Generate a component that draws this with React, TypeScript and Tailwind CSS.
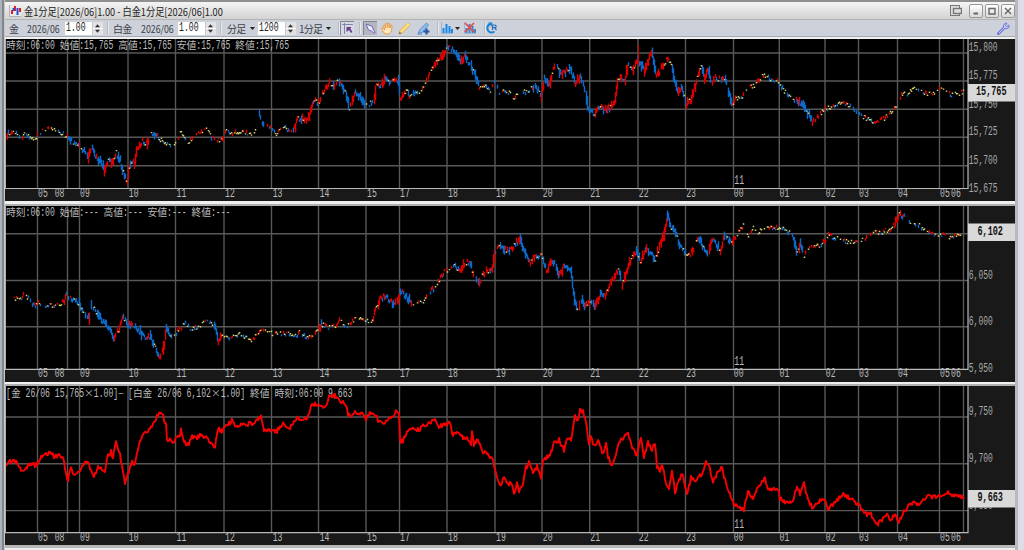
import type { ReactNode } from 'react';

type Point = [number, number];

interface PanelProps {
  top: number;
  height: number;
  axisY: number;
  title: string;
  titleY: number;
  gridLines: number[];
  prices: [string, number][];
  current: string;
  currentY: number;
  children: ReactNode;
}

const verticals = [
  37.5, 67.5, 79.5, 128, 175.5, 224, 271.5, 318.5, 366, 399.5, 447, 495, 542,
  589.7, 638, 685.5, 733.5, 779.3, 825, 858.5, 897.5, 939.5, 963.5,
];

const hours: [string, number][] = [
  ['05', 38], ['08', 54.7], ['09', 80], ['10', 128.8], ['11', 176.5],
  ['12', 225], ['13', 272.7], ['14', 319.7], ['15', 367], ['17', 400],
  ['18', 448], ['19', 496], ['20', 542.8], ['21', 590.3], ['22', 638.8],
  ['23', 686.2], ['00', 733.8], ['01', 779.6], ['02', 825.8], ['03', 859],
  ['04', 898], ['05', 940], ['06', 951],
];

const parse = (s: string): Point[] =>
  s.trim().split(/\s+/).map((p) => p.split(',').map(Number) as Point);

const gold = parse(`
6,142 8,131 10,134 16,132 20,140 25,133 30,139 35,138 40,132 45,130 50,128 55,130 62,133 68,138 75,144 82,149
88,156 91,146 95,158 100,160 104,169 108,160 111,164 116,153 120,160 124,177 127,180 130,162 134,163 137,148
142,141 147,145 150,133 153,133 158,138 165,143 172,147 177,139 181,131 187,143 194,136 200,132 207,128 212,139
216,141 222,139 226,130 232,134 240,131 247,134 254,132 259,115 263,124 270,129 276,134 283,126 289,131 294,128
298,118 304,121 309,117 313,101 319,103 323,92 329,83 334,85 337,79 340,85 345,90 349,108 355,93 361,98 365,104
372,103 373,104 376,86 382,84 385,77 388,81 393,81 398,79 400,98 404,95 406,90 409,97 413,92 418,93 423,87
428,75 434,64 440,57 447,47 452,49 457,55 461,61 465,57 470,65 476,78 479,89 485,86 490,90 494,83 499,92 504,91
509,93 514,99 519,92 525,92 531,88 535,85 541,97 544,79 549,84 553,69 557,67 561,75 569,68 575,82 580,76 585,92
588,109 594,114 598,106 604,110 610,108 615,100 618,79 625,79 628,62 632,70 638,60 644,71 648,60 652,53 656,78
661,67 666,60 670,60 674,80 678,93 681,85 686,105 691,98 695,85 701,66 704,78 708,70 711,84 715,78 720,79
725,78 729,94 732,105 736,98 742,97 748,88 754,86 760,78 765,75 772,80 778,81 783,90 789,97 796,101 803,105
810,117 812,123 818,116 825,109 832,106 840,102 850,106 857,113 865,118 874,123 882,120 890,113 896,106 901,95
908,93 915,88 922,93 932,95 940,89 950,95 957,94 964,92`);

const platinum = parse(`
12,299 20,298 25,294 30,301 34,305 38,303 46,306 53,306 60,305 64,300 66,294 69,298 75,299 80,305 85,315 89,318
91,306 96,312 101,320 106,325 111,332 114,340 118,330 123,317 128,325 135,327 140,332 145,338 150,337 155,347
159,357 163,350 166,330 172,336 178,331 184,323 190,329 196,327 204,323 207,321 214,324 218,341 222,335 230,338
240,334 250,341 258,333 265,328 272,334 280,333 288,334 296,335 300,332 308,338 315,334 321,324 328,328 336,325
340,319 343,324 348,326 356,318 364,321 372,321 375,310 380,299 385,296 390,302 396,304 400,291 406,297 411,303
418,302 425,300 430,291 436,286 441,275 447,270 453,264 459,270 465,263 470,263 473,276 479,281 485,272 492,268
495,250 500,245 505,250 511,249 515,243 520,240 524,253 529,263 535,256 541,256 546,270 552,260 557,270 559,276
564,265 571,271 573,292 575,303 578,312 580,298 585,307 590,301 595,306 600,293 605,297 612,278 618,270 622,284
628,265 632,258 636,250 640,262 645,250 650,252 655,260 660,243 664,235 667,215 671,227 675,232 680,247 685,252
688,256 692,252 698,238 703,248 708,254 712,240 716,244 720,250 724,236 728,240 732,243 738,232 743,226 747,236
753,227 758,232 765,229 775,228 780,227 790,233 794,240 797,253 800,245 804,256 808,248 816,247 822,244 828,235
835,238 842,240 850,243 858,240 865,239 872,233 882,232 890,229 895,224 899,215 904,217 910,225 916,222 923,230
932,235 940,234 950,237 955,236 962,233`);

const spread = parse(`
6,468 9,462 13,461 17,460 20,469 25,471 28,465 37,465 41,457 46,455 51,453 55,457 60,455 63,459 67,477 68,480
70,468 75,474 79,472 83,464 87,461 91,470 94,475 98,468 105,470 108,456 111,452 113,458 116,441 120,455 123,472
125,486 128,474 132,462 135,464 140,440 143,435 147,432 152,425 155,421 159,413 162,413 166,425 167,439 173,441
180,436 181,430 184,443 189,444 192,436 196,438 200,435 205,437 210,443 215,446 218,428 222,432 225,427 231,422
232,419 235,426 245,424 255,423 261,417 264,430 270,430 277,431 283,423 290,428 296,419 300,418 306,419 310,411
312,404 318,405 322,408 325,408 329,396 335,395 340,401 346,405 348,415 352,416 355,411 359,413 362,412 366,419
370,414 374,412 378,420 383,423 388,420 393,418 396,411 399,413 400,441 403,441 408,430 413,427 419,430 423,425
430,424 435,419 438,426 444,425 450,422 453,436 457,431 462,437 468,439 471,444 472,432 474,444 478,440 482,451
487,452 490,460 492,456 495,470 500,486 504,478 508,484 511,482 514,493 517,484 519,491 523,484 526,468 529,463
533,474 537,466 541,478 543,460 550,455 554,443 559,440 564,450 567,439 571,440 575,415 578,421 580,410 583,411
586,422 589,445 591,437 594,446 598,440 603,454 606,443 608,457 612,465 616,453 620,441 624,437 628,434 632,446
637,456 641,438 644,456 648,443 652,450 655,443 657,466 660,472 662,463 666,482 669,488 672,470 675,492 680,478
683,474 687,495 691,478 697,480 703,472 706,463 710,469 713,482 718,471 722,467 726,485 732,500 735,505 740,508
744,510 748,491 753,500 757,490 765,479 767,487 775,490 779,491 780,499 786,502 792,504 797,486 800,494 804,484
808,500 813,508 818,502 825,499 828,509 833,504 838,499 844,494 850,499 857,503 862,510 867,515 871,514 876,525
881,521 887,515 890,520 895,516 899,521 904,512 908,506 913,503 920,504 926,497 933,497 940,495 947,493 955,495
964,497`);

// small seeded generator so every render gives the same ticks
const createRandom = (seed: number) => {
  let s = seed;
  return () => {
    s = (s * 16807) % 2147483647;
    return s / 2147483647;
  };
};

const valueAt = (points: Point[], x: number) => {
  let i = 1;
  while (i < points.length - 1 && points[i][0] < x) i++;
  const [x0, y0] = points[i - 1];
  const [x1, y1] = points[i];
  return y0 + ((y1 - y0) * (x - x0)) / (x1 - x0);
};

const RED = '#dc0000';
const BLUE = '#0a6acc';
const YELLOW = '#d8d070';

const Candles = ({
  points,
  calm,
  seed,
}: {
  points: Point[];
  calm: Point[];
  seed: number;
}) => {
  const random = createRandom(seed);
  const paths: Record<string, string> = { [RED]: '', [BLUE]: '', [YELLOW]: '' };
  const end = points[points.length - 1][0];
  for (let x = points[0][0]; x < end; x += 1) {
    const quiet = calm.some(([a, b]) => x >= a && x <= b);
    const y = valueAt(points, x);
    const dy = valueAt(points, x + 1) - y;
    const r = random();
    const jitter = random() - 0.5;
    const size = random();
    if (r < (quiet ? 0.3 : 0.06)) continue;
    const yellow = r > (quiet ? 0.62 : 0.88);
    const color = yellow ? YELLOW : dy + jitter * 2.2 > 0 ? BLUE : RED;
    const half = yellow
      ? 0.7
      : Math.min(5, Math.abs(dy) / 2) + (quiet ? 0.5 + size : 0.9 + size * size * 3.4);
    const cy = y + jitter * (quiet ? 4.5 : 5);
    paths[color] += `M${x + 0.5} ${(cy - half).toFixed(1)}V${(cy + half).toFixed(1)}`;
  }
  return (
    <g fill="none" strokeWidth="1.4">
      <path d={paths[BLUE]} stroke={BLUE} />
      <path d={paths[RED]} stroke={RED} />
      <path d={paths[YELLOW]} stroke={YELLOW} strokeWidth="1.5" />
    </g>
  );
};

const SpreadLine = () => {
  const random = createRandom(77);
  let d = '';
  for (let x = 6; x <= 964; x += 1) {
    const y = valueAt(spread, x) + (random() - 0.5) * 4.4;
    d += `${x === 6 ? 'M' : 'L'}${x} ${y.toFixed(1)}`;
  }
  return <path d={d} fill="none" stroke="#f80000" strokeWidth="1.9" strokeLinejoin="round" />;
};

const isWide = (c: string) => c > '\u2000' || c === '×';

// fixed pitch text: kanji take two cells, everything else one narrow cell
const GridText = ({
  x,
  y,
  text,
  cell = 4.88,
  fill = '#bcbcbc',
  bold = false,
}: {
  x: number;
  y: number;
  text: string;
  cell?: number;
  fill?: string;
  bold?: boolean;
}) => {
  const runs: { text: string; x: number; wide: boolean }[] = [];
  let cursor = x;
  for (const c of text) {
    const wide = isWide(c);
    const last = runs[runs.length - 1];
    if (last && last.wide === wide) last.text += c;
    else runs.push({ text: c, x: cursor, wide });
    cursor += wide ? cell * 2 : cell;
  }
  return (
    <g fill={fill} fontWeight={bold ? 700 : 400}>
      {runs.map((run) =>
        run.wide ? (
          <text
            key={run.x}
            x={run.x}
            y={y}
            className="font-['Noto_Sans_CJK_JP',sans-serif] text-[9.76px]"
          >
            {run.text}
          </text>
        ) : (
          <text
            key={run.x}
            transform={`translate(${run.x} ${y}) scale(${cell / 7.2} 1)`}
            className="whitespace-pre font-['Liberation_Mono',monospace] text-[12px]"
          >
            {run.text}
          </text>
        ),
      )}
    </g>
  );
};

const Panel = ({
  top,
  height,
  axisY,
  title,
  titleY,
  gridLines,
  prices,
  current,
  currentY,
  children,
}: PanelProps) => (
  <svg
    className="block shrink-0 bg-[#191919]"
    width={1010}
    height={height}
    viewBox={`5 ${top} 1010 ${height}`}
  >
    <rect x="6" y={top} width="962" height={axisY - top} fill="#000" />
    <g stroke="#585858" strokeWidth="1.4">
      {verticals.map((x) => (
        <line key={x} x1={x} x2={x} y1={top} y2={axisY} />
      ))}
      {gridLines.map((y) => (
        <line key={y} x1="6" x2="968" y1={y} y2={y} />
      ))}
    </g>
    <GridText x={6} y={titleY} text={title} />
    <GridText x={734.3} y={axisY - 4.3} text="11" />
    {children}
    <path d={`M5 ${axisY}H968V${top}`} fill="none" stroke="#b8b8b8" strokeWidth="1.2" />
    <path d={`M5.5 ${top}V${axisY}`} stroke="#b0b0b0" />
    {hours.map(([label, x]) => (
      <GridText key={x} x={x} y={axisY + 8.1} text={label} />
    ))}
    {prices.map(([label, y]) => (
      <GridText key={label} x={968.8} y={y} text={label} cell={4.8} fill="#a8a8a8" />
    ))}
    <rect x="968" y={currentY} width="47" height="17.5" fill="#d9d9d9" />
    <GridText
      x={current.length > 5 ? 976 : 977.5}
      y={currentY + 11.2}
      text={current}
      cell={5.1}
      fill="#101010"
      bold
    />
  </svg>
);

const Divider = () => <div className="h-[12px] w-px bg-[#e8eaee] shadow-[-1px_0_0_#b7bac2]" />;

const Caret = () => (
  <svg width="5" height="3" viewBox="0 0 5 3" className="mt-px shrink-0">
    <path d="M0 0H5L2.5 3Z" fill="#222" />
  </svg>
);

const Label = ({ text, className }: { text: string; className: string }) => (
  <div
    className={`shrink-0 whitespace-nowrap pt-[2px] text-[10px] leading-[14px] text-[#3c4048] ${className}`}
  >
    {text}
  </div>
);

const NumberBox = ({ value }: { value: string }) => (
  <div className="flex h-[13px] w-[38px] shrink-0 items-center justify-between bg-white pl-px">
    <span className="w-[20px] origin-left scale-x-[0.68] whitespace-nowrap font-['Liberation_Mono',monospace] text-[12px] leading-[12px] text-[#222]">
      {value}
    </span>
    <svg width="11" height="13" viewBox="0 0 11 13">
      <rect width="11" height="13" fill="#e2e2e4" />
      <path d="M0 6.5H11" stroke="#fff" />
      <path d="M0.5 0V13" stroke="#c8c8cc" />
      <path d="M3 5.2H8L5.5 2.2ZM3 7.8H8L5.5 10.8Z" fill="#333" />
    </svg>
  </div>
);

const WindowButton = ({ children }: { children: ReactNode }) => (
  <div className="flex size-[14px] items-center justify-center rounded-[2px] border border-[#999] bg-gradient-to-b from-white to-[#d8d8d8]">
    <svg width="10" height="10" viewBox="0 0 10 10" fill="none" stroke="#666" strokeWidth="1.4">
      {children}
    </svg>
  </div>
);

const TitleBar = () => (
  <div className="flex h-[18px] items-center border-b border-[#b4b4b4] bg-gradient-to-b from-[#f4f4f4] to-[#d3d3d3] pl-1">
    <svg width="12" height="12" viewBox="0 0 12 12" className="shrink-0">
      <rect width="12" height="12" fill="#e8e8ee" />
      <path d="M0.5 0V11.5H12" fill="none" stroke="#b0b0b8" />
      <path d="M3 5V9M6 1V6M11 3V7" stroke="#e02020" strokeWidth="2" />
      <path d="M4.5 3V6M8.5 3V10" stroke="#2050d0" strokeWidth="2" />
    </svg>
    <div className="ml-[3px] w-[220px] origin-left scale-x-[0.837] whitespace-nowrap text-[11px] leading-[16px] text-[#222]">
      金1分足[2026/06]1.00 - 白金1分足[2026/06]1.00
    </div>
    <div className="ml-auto flex items-center gap-[2px]">
      <svg width="12" height="12" viewBox="0 0 12 12" className="mr-[5px]" fill="#ddd" stroke="#777">
        <rect x="0.5" y="0.5" width="9" height="10" />
        <rect x="3.5" y="3.5" width="8" height="5" strokeWidth="1.4" />
      </svg>
      <WindowButton>
        <path d="M2.5 7.5H7" strokeWidth="2" />
      </WindowButton>
      <WindowButton>
        <path d="M2 2.5H8V8H2Z" />
      </WindowButton>
      <WindowButton>
        <path d="M2 2L8 8M8 2L2 8" />
      </WindowButton>
    </div>
  </div>
);

const Toolbar = () => (
  <div className="flex h-[17px] items-center border-b border-[#a5a9b2] bg-[#cdd1d9] pl-1">
    <Label text="金" className="w-[18px]" />
    <Label text="2026/06" className="w-[38px] origin-left scale-x-[0.88]" />
    <NumberBox value="1.00" />
    <div className="w-[10px] pl-[5px]">
      <Divider />
    </div>
    <Label text="白金" className="w-[28px] tracking-[-0.8px]" />
    <Label text="2026/06" className="w-[37px] origin-left scale-x-[0.88]" />
    <NumberBox value="1.00" />
    <div className="w-[11px] pl-[5px]">
      <Divider />
    </div>
    <Label text="分足" className="w-[23px] tracking-[-0.8px]" />
    <Caret />
    <div className="ml-[3px]">
      <NumberBox value="1200" />
    </div>
    <Label text="1分足" className="ml-[3px] w-[27px] tracking-[-0.8px]" />
    <Caret />
    <div className="ml-[8px] flex items-center">
      <Divider />
      {/* crosshair cursor */}
      <svg width="14" height="14" viewBox="0 0 14 14">
        <rect width="14" height="14" fill="#d7d9e5" />
        <path d="M.5 14V.5H14" fill="none" stroke="#80838c" />
        <path d="M2 3.5H13M4.5 2V13" stroke="#7d86ae" />
        <path d="M6.5 6H11.5L10.3 7.5L12.5 11L11 12L9 9L6.5 11Z" fill="#65408b" />
      </svg>
      <div className="ml-[6px]">
        <Divider />
      </div>
      {/* selection pointer */}
      <svg width="14" height="14" viewBox="0 0 14 14" className="ml-[2px]">
        <rect width="14" height="14" fill="#b4b6c2" />
        <path d="M.5 14V.5H14" fill="none" stroke="#80838c" />
        <path d="M3 3L9.5 5.5L10 8L12 11.5L10.8 12L8.5 10L5.5 9Z" fill="#eeeeff" stroke="#7568b8" />
      </svg>
      {/* hand */}
      <svg width="12" height="13" viewBox="0 0 12 13" className="ml-[4px]">
        <path
          d="M2.5 7L1 5.5Q0 7 3 11Q5 13 8.5 11.5Q11 10 11 3.5L9.5 3L9 6L8.5 1.5L7 1.3V5.5L5.8 1L4.5 1.5L5 6L3.5 3L2.3 3.5L4 8Z"
          fill="#ffe8bd"
          stroke="#e39a48"
          strokeWidth="1"
        />
      </svg>
      {/* pencil */}
      <svg width="13" height="13" viewBox="0 0 13 13" className="ml-[5px]">
        <path d="M1 12L2 8.5L9.5 1L12 3.2L4.5 10.8Z" fill="#ffdc80" stroke="#d8a040" strokeWidth="0.8" />
        <path d="M1 12L1.7 9.8L3.3 11.3Z" fill="#6b5531" />
        <path d="M9 1.5L11.5 3.8" stroke="#fff1bd" />
      </svg>
      {/* pen with plus */}
      <svg width="13" height="13" viewBox="0 0 13 13" className="ml-[6px]">
        <path d="M1 11.5L3 7.5L9.5 1L11.5 3L6 10Z" fill="#8fbdf0" stroke="#4d8ace" strokeWidth="0.9" />
        <path d="M0.5 12H5" stroke="#4d8ace" />
        <path d="M9.5 6.5V12.5M6.5 9.5H12.5" stroke="#2959a4" strokeWidth="2.2" />
      </svg>
      <div className="ml-[8px]">
        <Divider />
      </div>
      <svg width="12" height="12" viewBox="0 0 12 12" className="ml-[2px]">
        <path d="M.5 0V11.5H12" stroke="#9fb8d4" fill="none" />
        <path d="M2.5 11V6M5.5 11V2M8.5 11V4M11 11V7" stroke="#1689e8" strokeWidth="2" />
      </svg>
      <div className="ml-[2px]">
        <Caret />
      </div>
      <svg width="12" height="12" viewBox="0 0 12 12" className="ml-[4px]">
        <path d="M.5 0V11.5H12" stroke="#9fb8d4" fill="none" />
        <path d="M2.5 11V6M5.5 11V2M8.5 11V4M11 11V7" stroke="#3d84c9" strokeWidth="2" />
        <path d="M1 1L10 10M10 1L1 10" stroke="#e54848" strokeWidth="1.7" />
      </svg>
      <div className="ml-[9px]">
        <Divider />
      </div>
      {/* reload */}
      <svg width="12" height="12" viewBox="0 0 12 12" fill="none">
        <path d="M4 2Q0 4 2 8.5Q4.5 12 8.5 9.5" stroke="#1685d8" strokeWidth="2" />
        <path d="M2 .5L6.5 .5L5.5 4.5Z" fill="#1685d8" />
        <path d="M6.5 8V3H8.5Q10.5 3 10 5L8.5 5.7L10.5 8M7 5.5H9" stroke="#2870bb" strokeWidth="1.2" />
      </svg>
    </div>
    {/* settings wrench */}
    <svg width="13" height="13" viewBox="0 0 13 13" className="ml-auto mr-[5px]" fill="none">
      <path d="M1.5 11.5L7 6" stroke="#7078da" strokeWidth="3" strokeLinecap="round" />
      <path d="M2 11L7 6" stroke="#c4c8ff" />
      <path d="M10 1Q6 1 6.5 5.5Q8 8 12 5.5V3L9.5 4.5L8.5 3.5Z" fill="#c1c6f5" stroke="#7078da" />
    </svg>
  </div>
);

const App = () => {
  return (
    <div className="flex h-[550px] w-[1024px] overflow-hidden bg-[#dcdde5] font-['Noto_Sans_CJK_JP',sans-serif]">
      <div className="w-[2px] bg-[#a9b4c0]" />
      <div className="w-[2px] bg-[#858585]" />
      <div className="w-px bg-[#c8c8c8]" />
      <div className="flex w-[1010px] flex-col bg-[#bebebe]">
        <div className="h-[2px] bg-[#8f8f8f]" />
        <TitleBar />
        <Toolbar />
        <div className="h-[2px] bg-[#f0f0f0]" />
        <Panel
          top={39}
          height={162}
          axisY={188.5}
          title="時刻:06:00 始値:15,765 高値:15,765 安値:15,765 終値:15,765"
          titleY={48.9}
          gridLines={[53, 81, 109.3, 137.3, 165.7]}
          prices={[
            ['15,800', 51.3],
            ['15,775', 79.2],
            ['15,750', 107.8],
            ['15,725', 135.4],
            ['15,700', 163.7],
            ['15,675', 192.4],
          ]}
          current="15,765"
          currentY={84}
        >
          <Candles
            points={gold}
            seed={4211}
            calm={[[14, 66], [158, 258], [264, 292], [418, 432], [480, 530], [734, 795], [814, 964]]}
          />
          <path d="M638.5 45V66" stroke="#d40000" />
        </Panel>
        <div className="h-[3px] bg-[#f0f0f0]" />
        <div className="h-[2px] bg-[#aeb0b0]" />
        <Panel
          top={206}
          height={176}
          axisY={369.3}
          title="時刻:06:00 始値:--- 高値:--- 安値:--- 終値:---"
          titleY={215.7}
          gridLines={[233.7, 280.5, 326.7]}
          prices={[
            ['6,050', 279],
            ['6,000', 325],
            ['5,950', 371.6],
          ]}
          current="6,102"
          currentY={223.5}
        >
          <Candles
            points={platinum}
            seed={9173}
            calm={[[8, 62], [172, 213], [222, 318], [322, 372], [412, 452], [734, 791], [805, 893], [905, 964]]}
          />
        </Panel>
        <div className="h-[2px] bg-[#f0f0f0]" />
        <div className="h-[2px] bg-[#aeb0b0]" />
        <Panel
          top={386}
          height={159}
          axisY={532.6}
          title="[金 26/06 15,765×1.00]−[白金 26/06 6,102×1.00] 終値 時刻:06:00 9,663"
          titleY={396.6}
          gridLines={[417, 463.7, 510.6]}
          prices={[
            ['9,750', 415.2],
            ['9,700', 461.8],
            ['9,650', 509],
          ]}
          current="9,663"
          currentY={490}
        >
          <SpreadLine />
        </Panel>
        <div className="h-[3px] bg-[#b8b8b8]" />
        <div className="h-[2px] bg-[#eeeeee]" />
      </div>
      <div className="w-[3px] bg-[#b9b9bd]" />
      <div className="w-[6px] bg-[#dcdde6]" />
    </div>
  );
};

export default App;
